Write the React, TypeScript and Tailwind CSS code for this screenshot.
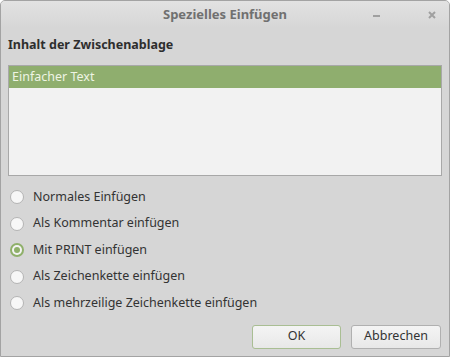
import React from "react";

const font = { fontFamily: '"Noto Sans", "Open Sans", sans-serif' };

function Radio({ checked, label }: { checked?: boolean; label: string }) {
  return (
    <div className="flex items-center h-[26.5px]">
      <div className="w-[18px] flex justify-center">
        {checked ? (
          <div className="w-[14px] h-[14px] rounded-full bg-[#8fb06a] flex items-center justify-center">
            <div className="w-[10px] h-[10px] rounded-full bg-[#f4f4f4] flex items-center justify-center">
              <div className="w-[6px] h-[6px] rounded-full bg-[#8fb06a]" />
            </div>
          </div>
        ) : (
          <div className="w-[14px] h-[14px] rounded-full border border-[#b4b4b4] bg-[#f7f7f7]" />
        )}
      </div>
      <span className="ml-[7px] text-[12.5px] text-[#333333]">{label}</span>
    </div>
  );
}

export default function App() {
  return (
    <div
      style={font}
      className="w-[450px] h-[357px] bg-[#d6d6d6] border border-[#a3a3a3] rounded-t-[5px] flex flex-col overflow-hidden"
    >
      <div className="h-[27px] grid grid-cols-[1fr_auto_1fr] items-center bg-gradient-to-b from-[#e2e2e2] to-[#d6d6d6]">
        <div />
        <div className="text-[13px] font-bold text-[#707070]">Spezielles Einfügen</div>
        <div className="flex justify-end items-center gap-[48px] pr-[13px]">
          <div className="w-[7px] h-[2px] bg-[#a0a0a0] mt-[2px]" />
          <svg width="8" height="8" viewBox="0 0 8 8">
            <path d="M1 1L7 7M7 1L1 7" stroke="#a0a0a0" strokeWidth="2" />
          </svg>
        </div>
      </div>
      <div className="flex flex-col px-[7px]">
        <div className="mt-[4px] h-[26px] flex items-center text-[12.5px] font-bold text-[#2e2e2e]">
          Inhalt der Zwischenablage
        </div>
        <div className="mt-[7px] h-[111px] border border-[#a8a8a8] bg-[#f2f2f2]">
          <div className="h-[22px] bg-[#8fae6e] flex items-center pl-[3px] text-[12.5px] text-[#eef4e4]">
            Einfacher Text
          </div>
        </div>
        <div className="mt-[8px] flex flex-col">
          <Radio label="Normales Einfügen" />
          <Radio label="Als Kommentar einfügen" />
          <Radio checked label="Mit PRINT einfügen" />
          <Radio label="Als Zeichenkette einfügen" />
          <Radio label="Als mehrzeilige Zeichenkette einfügen" />
        </div>
        <div className="mt-[8px] flex justify-end gap-[10px] pr-[1px]">
          <button className="w-[89px] h-[24px] rounded-[3px] border border-[#a9be93] bg-gradient-to-b from-[#f4f4f4] to-[#e8e8e8] text-[12.5px] text-[#333]">
            OK
          </button>
          <button className="w-[90px] h-[24px] rounded-[3px] border border-[#b0b0b0] bg-gradient-to-b from-[#f4f4f4] to-[#e8e8e8] text-[12.5px] text-[#333]">
            Abbrechen
          </button>
        </div>
      </div>
    </div>
  );
}
